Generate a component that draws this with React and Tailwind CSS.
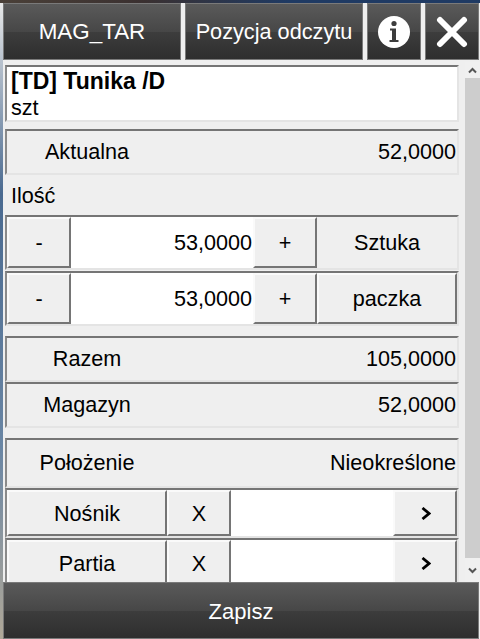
import React from "react";

const sunken = "border-2 border-t-[#757575] border-l-[#8a8a8a] border-r-[#e4e4e4] border-b-[#e4e4e4]";
const raised = "flex items-center justify-center bg-[#efefef] border-2 border-t-[#fafafa] border-l-[#fafafa] border-r-[#757575] border-b-[#757575] shrink-0";
const dark = "flex items-center justify-center border border-[#7a7a7a] text-white bg-[linear-gradient(#5a5a5a,#474747_50%,#3d3d3d_50%,#2e2e2e)]";

const InfoRow = ({ label, value, height, className = "" }) => {
  return (
    <div className={`${sunken} ${height} ${className} flex items-center justify-between pr-px`}>
      <span className="w-[160px] text-center">{label}</span>
      <span>{value}</span>
    </div>
  );
};

const QtyRow = ({ value, unit, unitRaised }) => {
  return (
    <div className={`${sunken} h-[55px] flex`}>
      <div className={`${raised} w-[64px]`}>-</div>
      <div className="flex-1 bg-white flex items-center justify-end pr-px">{value}</div>
      <div className={`${raised} w-[64px]`}>+</div>
      {unitRaised
        ? <div className={`${raised} w-[140px]`}>{unit}</div>
        : <div className="w-[140px] flex items-center justify-center">{unit}</div>}
    </div>
  );
};

const Chevron = () => (
  <svg width="10" height="13" viewBox="0 0 10 13" fill="none" className="ml-[2px]">
    <path d="M1.5 1 L8 6.5 L1.5 12" stroke="#000" strokeWidth="2.8" />
  </svg>
);

const PickRow = ({ label }) => {
  return (
    <div className={`${sunken} h-[50px] flex shrink-0`}>
      <div className={`${raised} w-[160px] pt-px`}>{label}</div>
      <div className={`${raised} w-[64px] pt-px`}>X</div>
      <div className="flex-1 bg-white"></div>
      <div className={`${raised} w-[64px]`}><Chevron /></div>
    </div>
  );
};

export default function App() {
  return (
    <div className="w-[480px] h-[639px] overflow-hidden flex flex-col bg-[#efefef] text-black text-[21.6px] leading-none font-['Liberation_Sans',Arial,sans-serif]">
      <div className="h-[3px] shrink-0 bg-[linear-gradient(90deg,#4a4038,#3a3030_30%,#1f3a63_60%,#1f3a63)]"></div>

      <div className="flex flex-1 min-h-0">
        <div className="w-[3px] shrink-0 bg-[linear-gradient(#e8e8e8,#4a6a90_30%,#6a86a4_70%,#b0a898)]"></div>
        <div className="flex-1 min-w-0 flex flex-col">
          <div className="h-[57px] shrink-0 flex gap-[4px] pr-px">
            <div className={`${dark} w-[178px] text-[22.4px] pt-px`}>MAG_TAR</div>
            <div className={`${dark} w-[178px] text-[21.7px]`}>Pozycja odczytu</div>
            <div className={`${dark} w-[54px]`}>
              <svg width="34" height="34" viewBox="0 0 34 34">
                <circle cx="17" cy="17" r="16" fill="#fff" />
                <circle cx="17" cy="8.5" r="2.6" fill="#3c3c3c" />
                <path d="M13 13.5 h6 v11.5 h2.5 v2 h-9 v-2 h2.5 v-9.5 h-2 z" fill="#3c3c3c" />
              </svg>
            </div>
            <div className={`${dark} w-[54px]`}>
              <svg width="32" height="32" viewBox="0 0 32 32">
                <path d="M4 4 L28 28 M28 4 L4 28" stroke="#fff" strokeWidth="6" strokeLinecap="round" />
              </svg>
            </div>
          </div>

          <div className="flex-1 min-h-0 flex pt-[2px]">
            <div className="flex-1 min-w-0 overflow-hidden flex flex-col pt-[3px] pl-[2px] pr-[6px]">
              <div className={`${sunken} h-[57px] shrink-0 bg-white pl-[4px] pt-px flex flex-col justify-center gap-[4px]`}>
                <div className="font-bold text-[23px]">[TD] Tunika /D</div>
                <div>szt</div>
              </div>
              <InfoRow label="Aktualna" value="52,0000" height="h-[46px] shrink-0" className="mt-[7px]" />
              <div className="h-[40px] shrink-0 flex items-center pl-[6px] pt-[2px]">Ilość</div>
              <div className="shrink-0 flex flex-col gap-px">
                <QtyRow value="53,0000" unit="Sztuka" />
                <QtyRow value="53,0000" unit="paczka" unitRaised />
              </div>
              <InfoRow label="Razem" value="105,0000" height="h-[46px] shrink-0" className="mt-[10px]" />
              <InfoRow label="Magazyn" value="52,0000" height="h-[46px] shrink-0" />
              <InfoRow label="Położenie" value="Nieokreślone" height="h-[50px] shrink-0" className="mt-[10px]" />
              <PickRow label="Nośnik" />
              <PickRow label="Partia" />
            </div>

            <div className="w-[15px] shrink-0 flex flex-col bg-[#cdcdcd]">
              <div className="h-[16px] bg-[#f0f0f0] flex items-center justify-center">
                <svg width="9" height="7" viewBox="0 0 9 7" fill="none"><path d="M1 5.5 L4.5 2 L8 5.5" stroke="#555" strokeWidth="2" /></svg>
              </div>
              <div className="flex-1"></div>
              <div className="h-[24px] bg-[#f0f0f0] flex items-center justify-center">
                <svg width="9" height="7" viewBox="0 0 9 7" fill="none"><path d="M1 1.5 L4.5 5 L8 1.5" stroke="#555" strokeWidth="2" /></svg>
              </div>
            </div>
          </div>

          <div className={`${dark} h-[57px] shrink-0 mr-px text-[22px] pt-[2px]`}>Zapisz</div>
        </div>
      </div>
    </div>
  );
}
